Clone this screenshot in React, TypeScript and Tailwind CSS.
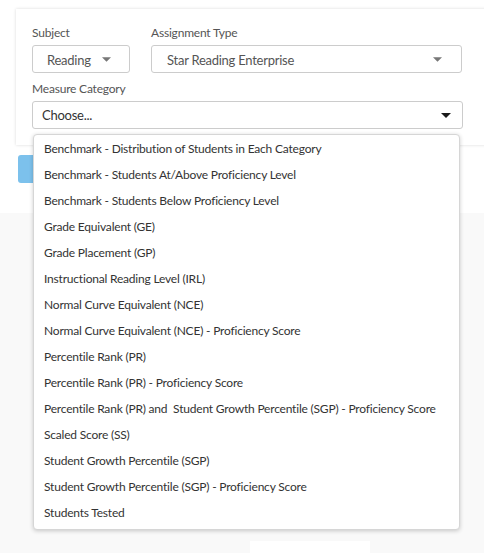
const options = [
  "Benchmark - Distribution of Students in Each Category",
  "Benchmark - Students At/Above Proficiency Level",
  "Benchmark - Students Below Proficiency Level",
  "Grade Equivalent (GE)",
  "Grade Placement (GP)",
  "Instructional Reading Level (IRL)",
  "Normal Curve Equivalent (NCE)",
  "Normal Curve Equivalent (NCE) - Proficiency Score",
  "Percentile Rank (PR)",
  "Percentile Rank (PR) - Proficiency Score",
  "Percentile Rank (PR) and  Student Growth Percentile (SGP) - Proficiency Score",
  "Scaled Score (SS)",
  "Student Growth Percentile (SGP)",
  "Student Growth Percentile (SGP) - Proficiency Score",
  "Students Tested",
];

const Caret = ({ dark }: { dark?: boolean }) => (
  <svg width={dark ? 10 : 9} height={5} viewBox="0 0 10 5">
    <path d="M0 0 L10 0 L5 5 Z" fill={dark ? "#1a1a1a" : "#777"} />
  </svg>
);

export default function App() {
  return (
    <div
      className="relative min-h-[553px] bg-white overflow-hidden flex flex-col"
      style={{ fontFamily: "Lato, 'Open Sans', sans-serif" }}
    >
      {/* Filter card */}
      <div className="pt-[9px] pl-4">
        <div className="w-[480px] bg-white shadow-[0_0_3px_rgba(0,0,0,0.15)] pt-4 pb-4 pl-4">
          <div className="flex gap-[21px]">
            <div className="flex flex-col">
              <label className="text-[12px] tracking-[-0.2px] leading-4 text-[#555] mb-1">Subject</label>
              <div className="w-[98px] h-[28px] border border-[#ccc] rounded-[3px] flex items-center pl-[14px] pr-[18px] justify-between text-[13px] tracking-[-0.25px] text-[#555]">
                <span className="pt-[3px]">Reading</span>
                <Caret />
              </div>
            </div>
            <div className="flex flex-col">
              <label className="text-[12px] tracking-[-0.2px] leading-4 text-[#555] mb-1">Assignment Type</label>
              <div className="w-[311px] h-[28px] border border-[#ccc] rounded-[3px] flex items-center pl-[15px] pr-[19px] justify-between text-[13px] tracking-[-0.25px] text-[#555]">
                <span className="pt-[3px]">Star Reading Enterprise</span>
                <Caret />
              </div>
            </div>
          </div>
          <div className="flex flex-col mt-2">
            <label className="text-[12px] tracking-[-0.2px] leading-4 text-[#555] mb-1">Measure Category</label>
            <div className="w-[431px] h-[28px] border border-[#ccc] rounded-[3px] flex items-center pl-[9px] pr-[11px] justify-between text-[13px] tracking-[-0.25px] text-[#333]">
              <span className="pt-[2px]">Choose...</span>
              <Caret dark />
            </div>
          </div>
        </div>
      </div>

      {/* Run button */}
      <div className="pl-[18px] mt-[10px]">
        <div className="w-[80px] h-[28px] bg-[#7cc1ec] rounded-[3px]" />
      </div>

      {/* Lower area */}
      <div className="mt-[30px] flex-1 bg-[#f9f9f9] flex flex-col justify-end">
        <div className="ml-[250px] w-[120px] h-[12px] bg-white" />
      </div>

      {/* Open dropdown menu */}
      <ul className="absolute left-[33px] top-[134px] w-[427px] bg-white rounded-[4px] border border-[#d6d6d6] shadow-[0_1px_4px_rgba(0,0,0,0.2)] pt-[1px] pb-[3px]">
        {options.map((o) => (
          <li key={o} className="h-[26px] flex items-center pl-[10px] text-[12px] tracking-[-0.2px] text-[#333] whitespace-pre">
            {o}
          </li>
        ))}
      </ul>
    </div>
  );
}
